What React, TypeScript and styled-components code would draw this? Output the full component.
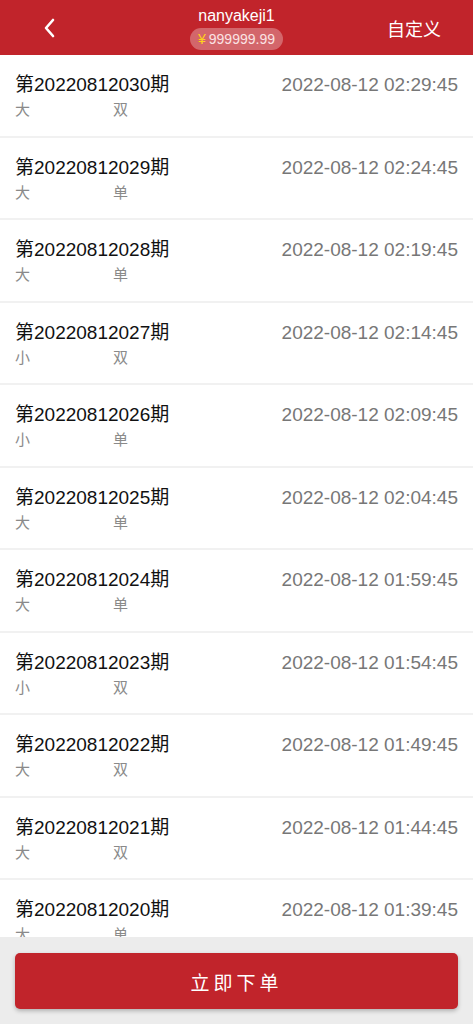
import styled, { createGlobalStyle } from "styled-components";

const GlobalStyle = createGlobalStyle`
  html, body {
    margin: 0;
    padding: 0;
    background: #ffffff;
    font-family: "Liberation Sans", Roboto, "Noto Sans CJK SC", sans-serif;
  }
  * { box-sizing: border-box; }
`;

const RED = "#c1242b";

const S = {
  Page: styled.div`
    padding-bottom: 90px;
  `,
  Header: styled.header`
    height: 55px;
    background: ${RED};
    display: grid;
    grid-template-columns: 100px 1fr 100px;
    align-items: center;
    color: #fff;
  `,
  Back: styled.button`
    border: 0;
    background: none;
    padding: 0 0 0 42px;
    height: 55px;
    display: flex;
    align-items: center;
    cursor: pointer;
  `,
  Center: styled.div`
    display: flex;
    flex-direction: column;
    align-items: center;
    gap: 3px;
    padding-top: 1px;
  `,
  User: styled.div`
    font-size: 16px;
    line-height: 18px;
  `,
  Balance: styled.div`
    background: rgba(255, 255, 255, 0.3);
    border-radius: 11px;
    height: 22px;
    padding: 0 8px;
    font-size: 14px;
    line-height: 22px;
    color: #fbe3e4;
  `,
  Yen: styled.span`
    color: #ffd21a;
    margin-right: 3px;
  `,
  Custom: styled.div`
    font-size: 18px;
    text-align: right;
    padding-right: 32px;
    font-family: "Noto Sans CJK SC", sans-serif;
  `,
  Row: styled.div`
    height: 82.5px;
    padding: 19px 15px 0;
    border-bottom: 2px solid #f1f1f1;
  `,
  Line: styled.div`
    display: flex;
    justify-content: space-between;
    align-items: center;
    height: 22px;
    line-height: 22px;
  `,
  Issue: styled.div`
    font-size: 19px;
    line-height: 22px;
    height: 22px;
    color: #111;
  `,
  Time: styled.div`
    font-size: 19px;
    line-height: 22px;
    color: #777;
  `,
  Tags: styled.div`
    display: grid;
    grid-template-columns: 98px 40px;
    margin-top: 4px;
    font-size: 15px;
    line-height: 18px;
    color: #8a8a8a;
    font-family: "Noto Sans CJK SC", sans-serif;
  `,
  Footer: styled.footer`
    position: fixed;
    left: 0;
    right: 0;
    bottom: 0;
    height: 87px;
    background: #ececec;
    padding: 16px 15px 15px;
  `,
  Submit: styled.button`
    width: 100%;
    height: 56px;
    border: 0;
    border-radius: 5px;
    background: ${RED};
    color: #fff;
    font-size: 19px;
    letter-spacing: 4px;
    padding-left: 6px;
    font-family: "Noto Sans CJK SC", sans-serif;
    box-shadow: 0 2px 4px rgba(0, 0, 0, 0.25);
  `,
};

const rows = [
  ["20220812030", "02:29:45", "大", "双"],
  ["20220812029", "02:24:45", "大", "单"],
  ["20220812028", "02:19:45", "大", "单"],
  ["20220812027", "02:14:45", "小", "双"],
  ["20220812026", "02:09:45", "小", "单"],
  ["20220812025", "02:04:45", "大", "单"],
  ["20220812024", "01:59:45", "大", "单"],
  ["20220812023", "01:54:45", "小", "双"],
  ["20220812022", "01:49:45", "大", "双"],
  ["20220812021", "01:44:45", "大", "双"],
  ["20220812020", "01:39:45", "大", "单"],
];

export default function App() {
  return (
    <>
      <GlobalStyle />
      <S.Page>
        <S.Header>
          <S.Back aria-label="back">
            <svg width="14" height="22" viewBox="0 0 14 22">
              <path d="M11 3 L4 11 L11 19" stroke="#fff" strokeWidth="2.6" fill="none" strokeLinecap="round" strokeLinejoin="round" />
            </svg>
          </S.Back>
          <S.Center>
            <S.User>nanyakeji1</S.User>
            <S.Balance>
              <S.Yen>¥</S.Yen>999999.99
            </S.Balance>
          </S.Center>
          <S.Custom>自定义</S.Custom>
        </S.Header>
        {rows.map(([no, time, size, parity]) => (
          <S.Row key={no}>
            <S.Line>
              <S.Issue>第{no}期</S.Issue>
              <S.Time>2022-08-12 {time}</S.Time>
            </S.Line>
            <S.Tags>
              <span>{size}</span>
              <span>{parity}</span>
            </S.Tags>
          </S.Row>
        ))}
      </S.Page>
      <S.Footer>
        <S.Submit>立即下单</S.Submit>
      </S.Footer>
    </>
  );
}
